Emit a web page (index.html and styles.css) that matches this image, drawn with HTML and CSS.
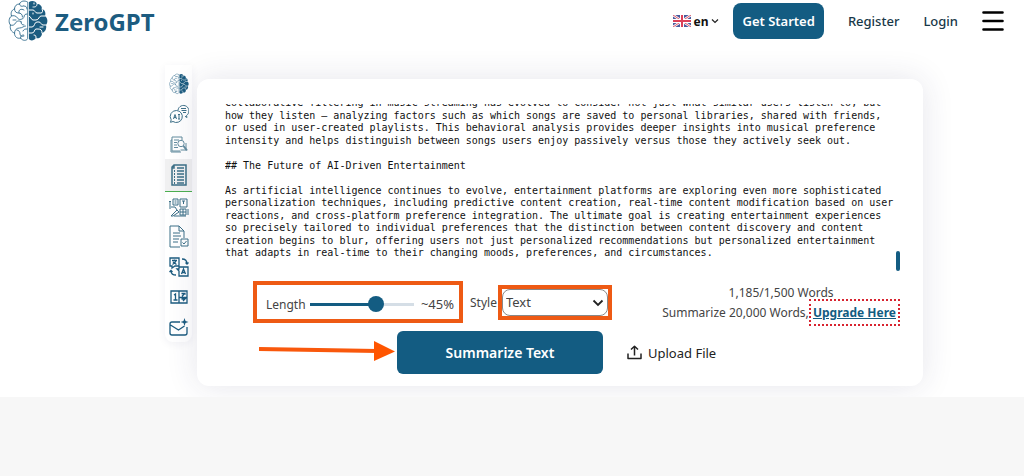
FILE: index.html
```html
<!DOCTYPE html>
<html lang="en">
<head>
  <meta charset="UTF-8" />
  <meta name="viewport" content="width=device-width, initial-scale=1.0"/>
  <title>ZeroGPT - Summarizer</title>
  <link rel="stylesheet" href="styles.css">
</head>
<body>
  <!-- Shared brain mark -->
  <svg class="sprite" aria-hidden="true">
    <symbol id="brain" viewBox="0 0 40 42">
      <g fill="none" stroke="currentColor" stroke-width="0.800" stroke-linecap="round" stroke-linejoin="round">
        <path d="M19.500 2c-3-2-7-1-8 2-3 0-5 2-5 5-3 1-4 4-3 7-3 2-3 7-1 9-1 4 1 7 4 8 0 4 3 6 6 5 2 3 6 3 7 1z"/>
        <path d="M11.500 4c0 2 2 3 4 2M16 10c-3-2-6 0-5 3M6.500 9c0 3 2 4 4 4s4 1 4 4M3.500 16c2-1 5 0 6 2s4 2 6 0M2.500 25c2 1 4 0 5-2s4-3 6-1M6.500 33c0-3 2-5 5-5s4-2 6-2M9 30c2 0 3 2 3 4s2 3 4 2M12.500 38c0-2 1-3 3-3M19 14c-2 0-3 1-3 3M15 31c1-2 2-2 4-2M16 6c2 0 3 1 3 3M5 20h3M13 22c0 2 1 3 3 3"/>
      </g>
      <path fill="currentColor" d="M21 2c3-2 7-1 8 2 3 0 5 2 5 5 3 1 4 4 3 7 3 2 3 7 1 9 1 4-1 7-4 8 0 4-3 6-6 5-2 3-6 3-7 1z"/>
      <path fill="none" stroke="#fff" stroke-width="1" stroke-linecap="round" d="M29 4c0 3-2 3-4 3M21 10h4c2 0 2 3 4 3h4c2 0 2-3 1-4M37 16h-4c-2 0-2 4-5 4h-3c-2 0-2-4-4-4M38 25h-3c-2 0-2-3-4-3h-2c-3 0-2 5-5 5h-3M34 33c0-3-1-4-4-4h-2c-2 0-1 4-4 4h-3M28 38c0-2 0-3-2-3M25 14v-1M32 27h3M26 3v1"/>
    </symbol>
  </svg>

  <header>
    <a class="logo" href="#">
      <svg class="logo-mark" aria-hidden="true"><use href="#brain"/></svg>
      <span>ZeroGPT</span>
    </a>
    <nav>
      <button class="lang" type="button">
        <svg width="18" height="12" viewBox="0 0 18 12" aria-hidden="true">
          <path fill="#4a5a9c" d="M0 0h18v12H0z"/>
          <path stroke="#fff" stroke-width="2.400" d="M0 0l18 12M18 0L0 12"/>
          <path stroke="#dc5468" stroke-width="1" d="M0 0l18 12M18 0L0 12"/>
          <path stroke="#fff" stroke-width="4" d="M9 0v12M0 6h18"/>
          <path stroke="#dc4058" stroke-width="2" d="M9 0v12M0 6h18"/>
        </svg>
        <span>en</span>
        <svg width="8" height="6" viewBox="0 0 8 6" aria-hidden="true"><path d="M1 1.500l3 3 3-3" fill="none" stroke="#222" stroke-width="1.200"/></svg>
      </button>
      <a class="get-started" href="#">Get Started</a>
      <a href="#">Register</a>
      <a href="#">Login</a>
      <button class="menu" type="button" aria-label="Menu">
        <svg width="22" height="20" viewBox="0 0 22 20"><path d="M1.500 1.500h19M1.500 10h19M1.500 18.500h19" stroke="#000" stroke-width="2.600" stroke-linecap="round"/></svg>
      </button>
    </nav>
  </header>

  <main class="workspace">
    <aside class="tools">
      <a href="#" aria-label="Home"><svg class="brain-small"><use href="#brain"/></svg></a>
      <a href="#" aria-label="AI chat">
        <svg viewBox="0 0 20 20">
          <path d="M9 6a5.500 5.500 0 1 1 8.500 5.500l.500 2-2-1.200"/>
          <path d="M7.500 6.500a6 6 0 1 1-3.500 11l-2.500.800.700-2.500A6 6 0 0 1 7.500 6.500z"/>
          <path d="M12 4.500h5M12.500 6.500h5M14 8.500h3M4.500 15l1.500-4.500L7.500 15M5 13.500h2M10 10.500V15M9 10.500h2M9 15h2"/>
        </svg>
      </a>
      <a href="#" aria-label="Plagiarism checker">
        <svg class="faded" viewBox="0 0 20 20">
          <path d="M11 17H3V3h10v3M3 6H2v12h10M5 6h5M5 8.500h3M5 11h3M5 13.500h4M11.500 16H17V9"/>
          <circle cx="12" cy="9.500" r="3.200"/><path d="M14.500 12l3.500 4.500" stroke-width="2"/>
        </svg>
      </a>
      <a class="active" href="#" aria-label="Summarizer">
        <svg viewBox="0 0 20 24">
          <path d="M5 2h12v20H3V4zM5 2v3H3" stroke-width="1.500"/>
          <path d="M8 5h7M8 8h7M8 11h7M8 14h7M8 17h7M8 20h7" stroke-width="1.300"/>
          <path d="M5 8h1M5 11h1M5 14h1M5 17h1M5 20h1" stroke-width="1.800"/>
        </svg>
      </a>
      <a href="#" aria-label="Paraphraser">
        <svg viewBox="0 0 20 20">
          <path d="M4 2h5v6H4zM11 2h7v8h-7zM13 4h3M14.500 4v3M5.500 4h2M5.500 6h2M1 12V4M0 5l1-1 1 1M19 12v6M2 19l6-6 2 2-6 4zM8 13l-2-3H2M11 12h6v6h-6zM11 15h6M14 12v6M5 19h12"/>
        </svg>
      </a>
      <a href="#" aria-label="Grammar checker">
        <svg class="tall" viewBox="0 0 20 24">
          <path d="M11 22H1V1h9l5 5v7M10 1v5h5M4 8h7M4 11h8M4 14h6M4 17h5"/>
          <path d="M12 14h7v7h-7zM13.500 17.500l1.500 1.500 2.500-3"/>
        </svg>
      </a>
      <a href="#" aria-label="Translator">
        <svg viewBox="0 0 20 20" class="bold">
          <path d="M1 1h9v8H6l-3 2V9H1zM3 3.500h5M5.500 2.500v1M3.500 7.500c2-1 3-2 3.500-4M4 5l3.500 2.500M10 10h9v9h-9v-5l-2-2h2zM12.500 17l2-5 2 5M13 15.500h3M13 2c3 0 5 1 5 5M16.500 5.500L18 7l1.500-1.500M7 18c-3 0-5-1-5-4M.500 15L2 13.500 3.500 15"/>
        </svg>
      </a>
      <a href="#" aria-label="Word counter">
        <svg viewBox="0 0 20 20" class="bold">
          <path d="M2 4h16v12H2zM10 4v12M5 8l1.500-1v6M4.500 13h4M12.500 6.500H15.500L13 9.500M15.500 6.500l1 1M12.500 12h3.500l-2 2M10 10.500h8"/>
        </svg>
      </a>
      <a href="#" aria-label="Email helper">
        <svg viewBox="0 0 20 20" class="bold">
          <path d="M11 5H3a2 2 0 0 0-2 2v9a2 2 0 0 0 2 2h13a2 2 0 0 0 2-2v-6M1.500 8l8 5 6-4"/>
          <path d="M15.500 1l1 3 3 1-3 1-1 3-1-3-3-1 3-1z" fill="currentColor" stroke="none"/>
        </svg>
      </a>
    </aside>

    <section class="card">
      <textarea id="source" aria-label="Text to summarize" spellcheck="false" wrap="off">
# How AI Shapes Modern Entertainment

Streaming services rely on recommendation systems to help audiences find movies, shows and songs.

## Music and Listening Habits

Collaborative filtering in music streaming has evolved to consider not just what similar users listen to, but
how they listen – analyzing factors such as which songs are saved to personal libraries, shared with friends,
or used in user-created playlists. This behavioral analysis provides deeper insights into musical preference
intensity and helps distinguish between songs users enjoy passively versus those they actively seek out.

## The Future of AI-Driven Entertainment

As artificial intelligence continues to evolve, entertainment platforms are exploring even more sophisticated
personalization techniques, including predictive content creation, real-time content modification based on user
reactions, and cross-platform preference integration. The ultimate goal is creating entertainment experiences
so precisely tailored to individual preferences that the distinction between content discovery and content
creation begins to blur, offering users not just personalized recommendations but personalized entertainment
that adapts in real-time to their changing moods, preferences, and circumstances.</textarea>
      <span class="scroll-thumb"></span>

      <div class="options">
        <div class="length highlight">
          <label for="length">Length</label>
          <input type="range" id="length" min="0" max="100" value="66">
          <output for="length">~45%</output>
        </div>
        <div class="style-option">
          <label for="style">Style</label>
          <div class="select-wrap highlight">
            <select id="style">
              <option>Text</option>
              <option>Bullet points</option>
            </select>
            <svg width="12" height="8" viewBox="0 0 12 8" aria-hidden="true"><path d="M1.500 1.500L6 6l4.500-4.500" fill="none" stroke="#222" stroke-width="1.800"/></svg>
          </div>
        </div>
        <div class="word-count">
          <p>1,185/1,500 Words</p>
          <p>Summarize 20,000 Words, <a href="#">Upgrade Here</a></p>
        </div>
      </div>

      <div class="actions">
        <div class="submit-wrap">
          <svg class="arrow" width="136" height="22" viewBox="0 0 136 22" aria-hidden="true">
            <path d="M0 9l118 2" stroke="#f9580c" stroke-width="4"/>
            <path d="M115 1l21 10.500L115 21z" fill="#ff5500"/>
          </svg>
          <button class="submit" type="button">Summarize Text</button>
        </div>
        <button class="upload" type="button">
          <svg width="15" height="15" viewBox="0 0 15 15" aria-hidden="true"><path d="M1 8.500V13.500h13V8.500M7.500 10.500V1.500M4 4.500l3.500-3.300L11 4.500" fill="none" stroke="#222" stroke-width="1.500" stroke-linejoin="round"/></svg>
          Upload File
        </button>
      </div>
    </section>
  </main>

  <script>
    // keep the end of the pasted text in view
    const source = document.getElementById('source');
    source.scrollTop = source.scrollHeight;
  </script>
</body>
</html>
```
FILE: styles.css
```css
* {
  box-sizing: border-box;
}

body {
  margin: 0;
  font-family: 'Noto Sans', 'Open Sans', sans-serif;
  font-size: 12px;
  color: #444;
  background-color: #f7f7f7;
}

button {
  font-family: inherit;
  border: none;
  background: none;
  padding: 0;
  cursor: pointer;
}

a {
  text-decoration: none;
}

.sprite {
  display: none;
}

header {
  display: flex;
  justify-content: space-between;
  align-items: center;
  height: 44px;
  padding: 0 20px 2px 8px;
  background-color: #fff;
}

.logo {
  display: flex;
  align-items: center;
  gap: 7px;
  color: #1c5c80;
  font-size: 24px;
  font-weight: 700;
}

.logo-mark {
  width: 40px;
  height: 42px;
}

nav {
  display: flex;
  align-items: center;
  gap: 24px;
  font-size: 13px;
  font-weight: 500;
}

nav a {
  color: #183848;
}

.lang {
  display: flex;
  align-items: center;
  gap: 3px;
  margin-right: -10px;
  font-size: 12px;
  font-weight: 700;
  color: #111;
}

.get-started {
  padding: 8px 9px;
  line-height: 20px;
  font-weight: 600;
  color: #fff;
  background-color: #135c82;
  border-radius: 8px;
}

.menu {
  display: flex;
}

.workspace {
  display: flex;
  align-items: flex-start;
  gap: 5px;
  padding: 21px 101px 11px 165px;
  background-color: #fff;
  overflow: hidden;
}

.tools {
  display: flex;
  flex-direction: column;
  flex: 0 0 27px;
  padding-top: 4px;
  border-radius: 0 0 8px 8px;
  background-color: #fff;
  box-shadow: 0 2px 8px rgba(30, 40, 90, 0.06);
}

.tools a {
  display: flex;
  align-items: center;
  justify-content: center;
  height: 30px;
  color: #3d7088;
}

.tools a.active {
  height: 33px;
  background-color: #f0f0f1;
  border-bottom: 1px solid #4caf50;
}

.tools svg {
  width: 20px;
  height: 20px;
  fill: none;
  stroke: currentColor;
  stroke-width: 1;
}

.tools .brain-small {
  height: 24px;
  stroke: none;
  color: #1c5c80;
}

.tools .active svg,
.tools .tall {
  height: 24px;
}

.tools .faded {
  opacity: 0.8;
}

.tools .bold {
  color: #1c5c80;
  stroke-width: 1.3;
}

.card {
  position: relative;
  flex: 1;
  min-width: 0;
  margin-top: 14px;
  padding: 25px 23px 12px 28px;
  border-radius: 12px;
  background-color: #fff;
  box-shadow: 0 0 32px rgba(40, 45, 90, 0.12);
}

textarea {
  display: block;
  width: 100%;
  height: 167px;
  padding: 0 0 11px;
  border: none;
  outline: none;
  resize: none;
  overflow: hidden;
  font-family: 'DejaVu Sans Mono', monospace;
  font-size: 10px;
  line-height: 1.25;
  color: #111;
}

.scroll-thumb {
  position: absolute;
  top: 172px;
  right: 23px;
  width: 4px;
  height: 20px;
  border-radius: 2px;
  background-color: #135c82;
}

.options {
  display: flex;
  align-items: center;
  padding-left: 28px;
  margin-top: 10px;
}

.highlight {
  border: 4px solid #ee5a14;
}

.length {
  display: flex;
  align-items: center;
  gap: 4px;
  width: 210px;
  height: 42px;
  padding: 4px 5px 0 9px;
}

.length output {
  margin-left: auto;
  font-size: 13px;
}

input[type="range"] {
  appearance: none;
  width: 104px;
  height: 16px;
  margin: 0;
  background: linear-gradient(to right, #135c82 65%, #d5dee6 65%) center / 100% 3px no-repeat;
}

input[type="range"]::-webkit-slider-thumb {
  appearance: none;
  width: 16px;
  height: 16px;
  border-radius: 50%;
  background-color: #135c82;
}

.style-option {
  display: flex;
  align-items: center;
  gap: 1px;
  margin-left: 7px;
}

.select-wrap {
  position: relative;
  width: 114px;
  height: 35px;
}

.select-wrap svg {
  position: absolute;
  right: 4px;
  top: 10px;
  pointer-events: none;
}

select {
  appearance: none;
  width: 100%;
  height: 100%;
  padding: 0 3px;
  border: 1px solid #888;
  border-radius: 8px;
  background-color: #fff;
  font-family: inherit;
  font-size: 13px;
  color: #444;
}

.word-count {
  margin-left: auto;
  padding-top: 2px;
  text-align: center;
  white-space: nowrap;
}

.word-count p {
  margin: 0;
  line-height: 20px;
}

.word-count a {
  margin-left: -3px;
  padding: 3px 2px;
  border: 2px dotted #d8232f;
  color: #135c82;
  font-weight: 700;
  text-decoration: underline;
}

.actions {
  display: flex;
  align-items: center;
  gap: 24px;
  margin-top: 8px;
  padding-left: 172px;
}

.submit-wrap {
  position: relative;
}

.arrow {
  position: absolute;
  right: 100%;
  top: 9px;
  margin-right: 2px;
}

.submit {
  width: 206px;
  height: 43px;
  border-radius: 6px;
  background-color: #135c82;
  color: #fff;
  font-size: 14px;
  font-weight: 600;
}

.upload {
  display: flex;
  align-items: center;
  gap: 6px;
  font-size: 13px;
  color: #222;
}
```
